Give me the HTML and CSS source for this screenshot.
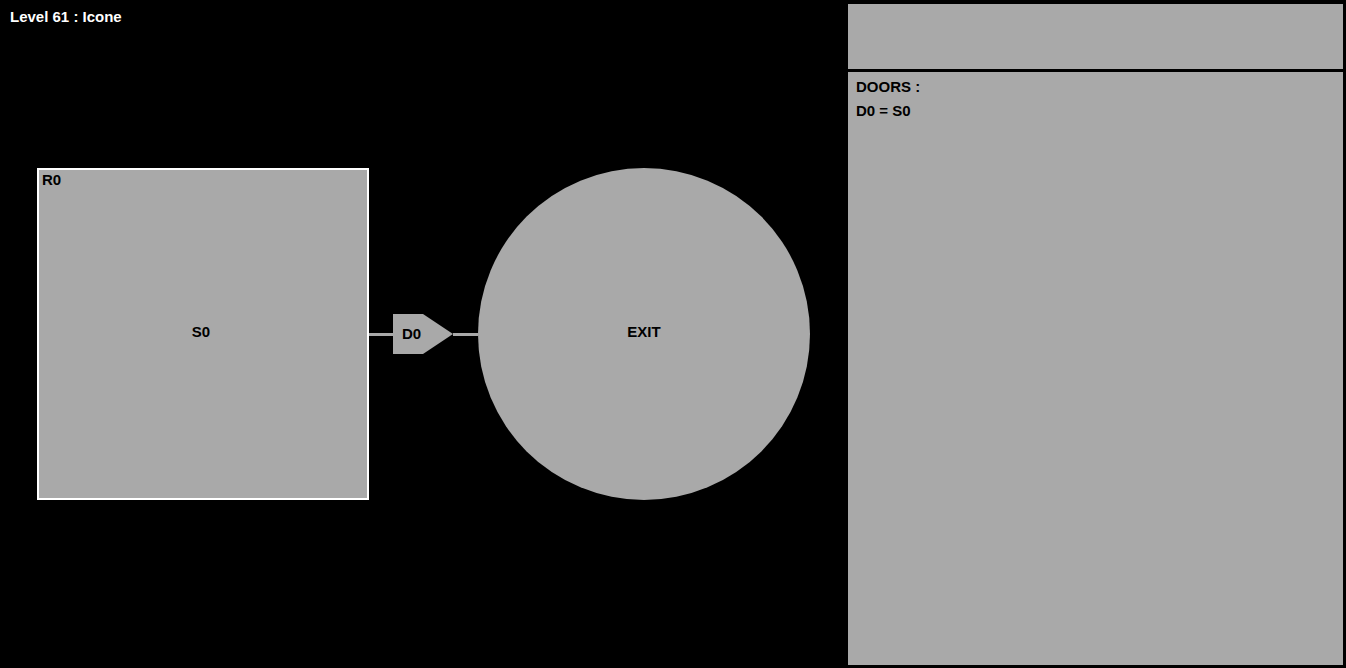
FILE: index.html
```html
<!DOCTYPE html>
<html lang="fr">
<head>
    <meta charset="UTF-8">
    <meta name="viewport" content="width=device-width, initial-scale=1.0">
    <title>Level 61 : Icone</title>
    <link rel="stylesheet" href="styles.css">
</head>
<body>
    <div class="game">
        <!-- Zone du niveau -->
        <div class="board">
            <div class="level-title">Level 61 : Icone</div>
            <div class="map">
                <div class="room">
                    <span class="room-name">R0</span>
                    <span class="switch">S0</span>
                </div>
                <div class="link"></div>
                <div class="door">D0</div>
                <div class="link link-right"></div>
                <div class="exit"><span>EXIT</span></div>
            </div>
        </div>

        <!-- Panneau lateral -->
        <div class="side">
            <div class="side-top"></div>
            <div class="side-info">
                <div>DOORS :</div>
                <div>D0 = S0</div>
            </div>
        </div>
    </div>
</body>
</html>
```
FILE: styles.css
```css
body {
    margin: 0;
    background: #000;
    font-family: "Liberation Sans", Arial, sans-serif;
    font-weight: bold;
    font-size: 15px;
    line-height: 16px;
    color: #000;
}
.game {
    display: grid;
    grid-template-columns: 848px 495px;
    height: 668px;
}
.board {
    display: flex;
    flex-direction: column;
}
.level-title {
    color: #fff;
    padding: 9px 0 0 10px;
}
.map {
    display: flex;
    align-items: center;
    margin: 143px 0 0 37px;
}
.room {
    position: relative;
    width: 328px;
    height: 328px;
    border: 2px solid #fff;
    background: #a9a9a9;
    display: grid;
    place-items: center;
}
.room-name {
    position: absolute;
    top: 2px;
    left: 3px;
}
.switch {
    margin: -4px 0 0 -4px;
}
.link {
    width: 24px;
    height: 3px;
    background: #a9a9a9;
}
.link-right {
    width: 25px;
}
.door {
    width: 51px;
    height: 40px;
    padding-left: 9px;
    display: flex;
    align-items: center;
    background: #a9a9a9;
    clip-path: polygon(0 0, 30px 0, 60px 20px, 30px 40px, 0 40px);
}
.exit {
    width: 332px;
    height: 332px;
    border-radius: 50%;
    background: #a9a9a9;
    display: grid;
    place-items: center;
}
.exit span {
    margin-top: -4px;
}
.side {
    display: flex;
    flex-direction: column;
    gap: 3px;
    padding: 4px 0 3px;
}
.side-top {
    height: 65px;
    background: #a9a9a9;
}
.side-info {
    flex: 1;
    background: #a9a9a9;
    padding: 3px 8px;
    line-height: 24px;
}
```
